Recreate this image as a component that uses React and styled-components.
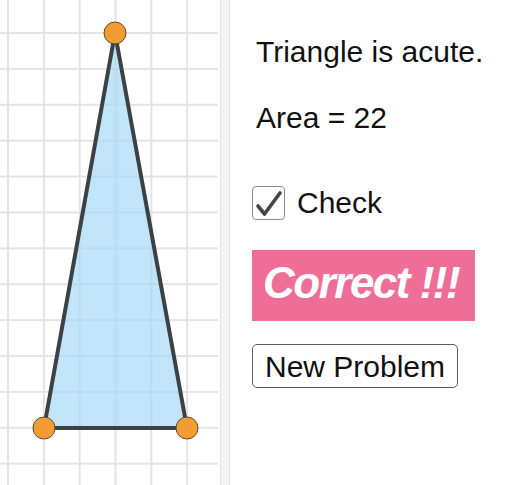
import React from "react";
import styled, { createGlobalStyle } from "styled-components";

const Global = createGlobalStyle`
  html, body { margin: 0; padding: 0; background: #fff; }
  body { font-family: "Liberation Sans", Arial, sans-serif; color: #111; }
`;

const Page = styled.div`
  display: flex;
  width: 512px;
  height: 485px;
  overflow: hidden;
  background: #fff;
`;

const Canvas = styled.div`
  width: 218px;
  height: 485px;
  flex: none;
  background-color: #fff;
  background-image:
    linear-gradient(to right, #e4e4e4 0, #e4e4e4 2px, transparent 2px),
    linear-gradient(to bottom, #e4e4e4 0, #e4e4e4 2px, transparent 2px);
  background-size: 35.85px 100%, 100% 35.9px;
  background-position: 7px 0, 0 32px;
`;

const Board = styled.svg`
  display: block;
`;

const Divider = styled.div`
  width: 8px;
  margin-left: 2px;
  flex: none;
  background: #f4f4f4;
  border-left: 1px solid #e4e4e4;
  border-right: 1px solid #e4e4e4;
`;

const Panel = styled.div`
  display: flex;
  flex-direction: column;
  align-items: flex-start;
  padding: 34px 0 0 22px;
`;

const Line = styled.div`
  font-size: 30px;
  line-height: 35px;
  margin-left: 4px;
  margin-top: ${(p) => p.$top || 0}px;
  white-space: nowrap;
`;

const CheckRow = styled.label`
  display: flex;
  align-items: center;
  gap: 12px;
  margin-top: 50px;
  height: 35px;
  font-size: 30px;
  line-height: 35px;
`;

const Box = styled.span`
  width: 33px;
  height: 34px;
  box-sizing: border-box;
  border: 1.5px solid #8a8a8a;
  border-radius: 4px;
  background: #fff;
  display: flex;
  align-items: center;
  justify-content: center;
`;

const Banner = styled.div`
  margin-top: 30px;
  width: 223px;
  height: 71px;
  box-sizing: border-box;
  padding: 7px 0 0 11px;
  background: #ee6e97;
  color: #fff;
  font-weight: bold;
  font-style: italic;
  font-size: 44px;
  line-height: 52px;
  letter-spacing: -1.5px;
  white-space: nowrap;
`;

const Button = styled.button`
  margin-top: 23px;
  height: 44px;
  width: 206px;
  box-sizing: border-box;
  padding: 0 10px;
  border: 1.5px solid #5c5c5c;
  border-radius: 5px;
  background: #fff;
  color: #111;
  font-family: "Liberation Sans", Arial, sans-serif;
  font-size: 30px;
  line-height: 35px;
  white-space: nowrap;
`;

const points = [
  [115, 33],
  [44, 428],
  [187, 428],
];

export default function App() {
  return (
    <>
      <Global />
      <Page>
        <Canvas>
          <Board width="218" height="485" viewBox="0 0 218 485">
            <polygon
              points={points.map((p) => p.join(",")).join(" ")}
              fill="#9fd6f5"
              fillOpacity="0.65"
              stroke="#3c4146"
              strokeWidth="4"
              strokeLinejoin="round"
            />
            {points.map(([x, y], i) => (
              <circle key={i} cx={x} cy={y} r="11" fill="#f29c33" stroke="#5e4a2c" strokeWidth="1" />
            ))}
          </Board>
        </Canvas>
        <Divider />
        <Panel>
          <Line>Triangle is acute.</Line>
          <Line $top={31}>Area = 22</Line>
          <CheckRow>
            <Box>
              <svg width="30" height="30" viewBox="0 0 30 30">
                <path d="M4 18 L10.5 26 L26 5" fill="none" stroke="#3f454b" strokeWidth="3.6" strokeLinecap="round" strokeLinejoin="round" />
              </svg>
            </Box>
            Check
          </CheckRow>
          <Banner>Correct !!!</Banner>
          <Button>New Problem</Button>
        </Panel>
      </Page>
    </>
  );
}
